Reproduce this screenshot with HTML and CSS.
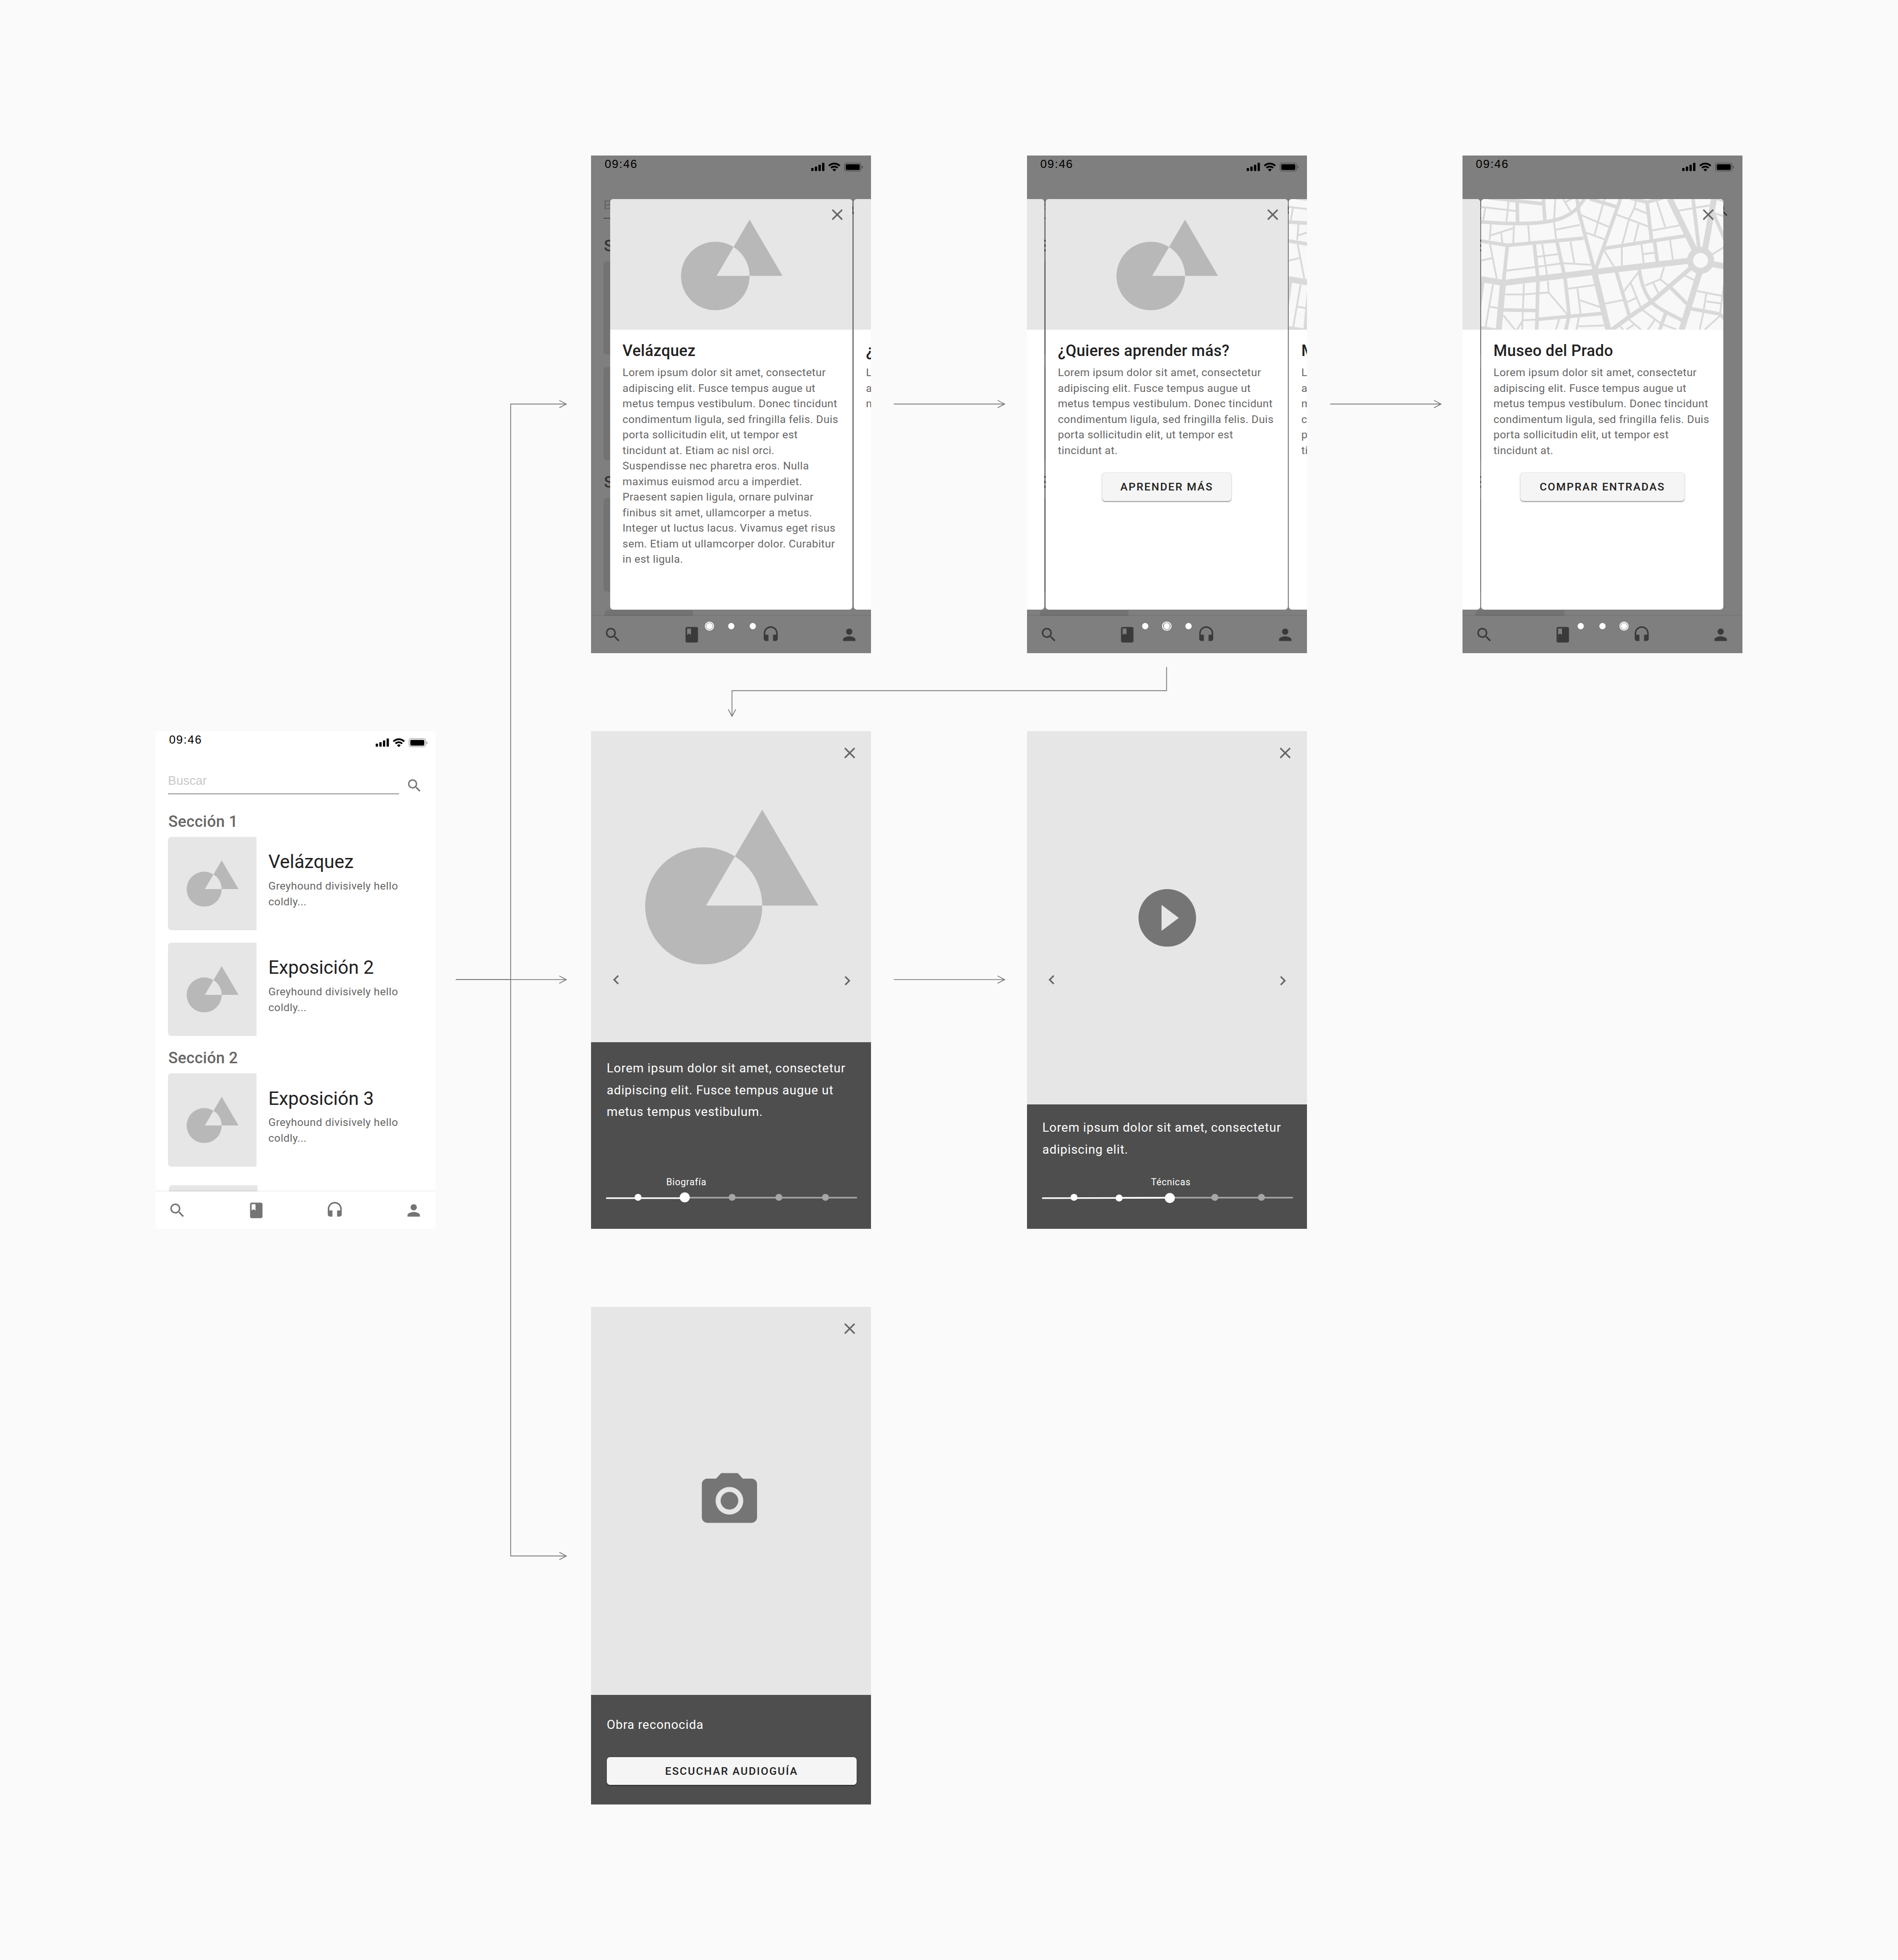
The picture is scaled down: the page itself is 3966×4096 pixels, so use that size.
FILE: index.html
```html
<!DOCTYPE html>
<html lang="es">
<head>
<meta charset="utf-8">
<title>Museo · flujo de pantallas</title>
<link rel="stylesheet" href="styles.css">
</head>
<body>

<svg class="defs" aria-hidden="true">
  <symbol id="i-search" viewBox="0 0 24 24"><path d="M15.5 14h-.79l-.28-.27A6.471 6.471 0 0 0 16 9.5 6.5 6.5 0 1 0 9.5 16c1.61 0 3.09-.59 4.23-1.57l.27.28v.79l5 4.99L20.49 19l-4.99-5zm-6 0C7.01 14 5 11.99 5 9.5S7.01 5 9.5 5 14 7.01 14 9.5 11.99 14 9.5 14z"/></symbol>
  <symbol id="i-book" viewBox="0 0 24 24"><path d="M18 2H6c-1.1 0-2 .9-2 2v16c0 1.1.9 2 2 2h12c1.1 0 2-.9 2-2V4c0-1.1-.9-2-2-2zM6 4h5v8l-2.5-1.5L6 12V4z"/></symbol>
  <symbol id="i-headset" viewBox="0 0 24 24"><path d="M12 1c-4.97 0-9 4.03-9 9v7c0 1.66 1.34 3 3 3h3v-8H5v-2c0-3.87 3.13-7 7-7s7 3.13 7 7v2h-4v8h3c1.66 0 3-1.34 3-3v-7c0-4.97-4.03-9-9-9z"/></symbol>
  <symbol id="i-person" viewBox="0 0 24 24"><path d="M12 12c2.21 0 4-1.79 4-4s-1.79-4-4-4-4 1.79-4 4 1.79 4 4 4zm0 2c-2.67 0-8 1.34-8 4v2h16v-2c0-2.66-5.33-4-8-4z"/></symbol>
  <symbol id="i-close" viewBox="0 0 24 24"><path d="M19 6.41L17.59 5 12 10.59 6.41 5 5 6.41 10.59 12 5 17.59 6.41 19 12 13.41 17.59 19 19 17.59 13.41 12z"/></symbol>
  <symbol id="i-left" viewBox="0 0 24 24"><path d="M15.41 7.41L14 6l-6 6 6 6 1.41-1.41L10.83 12z"/></symbol>
  <symbol id="i-right" viewBox="0 0 24 24"><path d="M10 6L8.59 7.41 13.17 12l-4.58 4.59L10 18l6-6z"/></symbol>
  <symbol id="i-play" viewBox="0 0 24 24"><path d="M12 2C6.48 2 2 6.48 2 12s4.48 10 10 10 10-4.48 10-10S17.52 2 12 2zm-2 14.5v-9l6 4.5-6 4.5z"/></symbol>
  <symbol id="i-camera" viewBox="0 0 24 24"><circle cx="12" cy="12" r="3.2"/><path d="M9 2L7.17 4H4c-1.1 0-2 .9-2 2v12c0 1.1.9 2 2 2h16c1.1 0 2-.9 2-2V6c0-1.1-.9-2-2-2h-3.17L15 2H9zm3 15c-2.76 0-5-2.24-5-5s2.24-5 5-5 5 2.24 5 5-2.24 5-5 5z"/></symbol>
  <symbol id="i-status" viewBox="0 0 67 11.4">
    <rect x="0" y="6.7" width="3" height="4" rx=".8"/>
    <rect x="4.67" y="4.9" width="3" height="5.8" rx=".8"/>
    <rect x="9.33" y="2.6" width="3" height="8.1" rx=".8"/>
    <rect x="14" y="0.2" width="3" height="10.5" rx=".8"/>
    <path transform="translate(22.1 0)" d="M7.67 2.28c2.23 0 4.37.85 5.98 2.38.12.12.31.12.43 0l1.16-1.17a.32.32 0 0 0 0-.45 10.9 10.9 0 0 0-15.14 0 .32.32 0 0 0 0 .45l1.16 1.17c.12.12.31.12.43 0a8.67 8.67 0 0 1 5.98-2.38zm0 3.8c1.22 0 2.4.46 3.29 1.28.12.12.32.12.43 0l1.16-1.18a.32.32 0 0 0 0-.46 7.15 7.15 0 0 0-9.76 0 .32.32 0 0 0 0 .46l1.16 1.18c.12.12.31.12.43 0a4.87 4.87 0 0 1 3.29-1.28zm2.23 2.58a.31.31 0 0 1-.01.45l-2 2.02a.32.32 0 0 1-.45 0l-2-2.02a.31.31 0 0 1-.01-.45 3.43 3.43 0 0 1 4.47 0z"/>
    <rect x="43" y=".5" width="21" height="10.33" rx="2.3" fill="none" stroke="#000" stroke-opacity=".35"/>
    <path d="M65.2 3.7v4c.8-.35 1.3-1.13 1.3-2s-.5-1.65-1.3-2z" fill-opacity=".4"/>
    <rect x="44.5" y="2" width="18" height="7.33" rx="1.33"/>
  </symbol>
  <symbol id="i-art" viewBox="0 0 296 264.4"><path fill-rule="evenodd" d="M0 164.4a100 100 0 1 1 200 0a100 100 0 1 1 -200 0zM104 163.8L200 0L296 163.8z"/></symbol>
  <symbol id="i-map" viewBox="42.8 36 1482.5 1008" preserveAspectRatio="none">
    <rect class="map-ground" x="42" y="35" width="1484" height="1010"/>
    <g class="road road-s">
      <path d="M42 96L255 128M210 55L197 212M68 105L55 200M102 232L94 352M98 317L240 260M165 295L172 375M243 240L239 378M330 236L338 366"/>
      <path d="M496 36L488 195V215L501 345M544 36L592 138M560 58L596 34M498 273L645 236M640 153L822 250M798 34L787 75L735 312M676 292L795 346"/>
      <path d="M990 50L978 105L945 195L905 382M868 155L1065 248M980 108L1055 147M1005 225L978 365M1116 55L1167 250M1088 278L1255 239M1250 125L1442 84M1478 36L1526 54M1465 145L1526 168M1455 462L1526 407"/>
      <path d="M902 400V550M793 430L853 557M1022 385L1035 530M1032 461L1100 450M1196 350L1214 502M588 362L612 530M545 531L712 543M416 382L445 620M385 481L512 461M198 588L380 560L530 533M42 511L110 491M97 385L138 652"/>
      <path d="M115 695L70 1022M98 867L145 876M304 690L298 880L293 1045M190 772H300L455 757L570 928M450 668L455 757M178 932L252 1048M295 975L260 1048M297 971L373 966"/>
      <path d="M519 962L499 1046M640 950L624 1046M630 1018L795 1011M573 728L735 699M631 725L650 918M645 816L770 869M798 843L910 815M1003 600L915 748M957 685L1017 870M935 832L988 799"/>
      <path d="M1160 560L1137 655L1045 702M1137 655L1190 708M1095 685L1127 767M1287 625L1347 663M1362 745L1515 783M1418 765L1403 885M1418 826L1507 841M1526 700L1503 910M1400 912L1377 1046M1500 938L1406 1046"/>
      <path d="M1030 893L1140 997L1235 1042M1103 968L1060 1046M947 965L1021 1046M978 1003L930 1042M893 1018L911 1046"/>
    </g>
    <g class="road road-m">
      <path d="M42 212C140 222 290 231 390 219C500 206 570 180 633 103L674 34M88 26L415 72M263 50L265 215M423 34L432 205"/>
      <path d="M42 359L203 393L668 338M203 393L180 670M629 34L638 130L735 590M894 34L740 585M706 34L868 95M955 30L1056 60L1150 28M1056 60L1083 345M795 416L1287 320"/>
      <path d="M1101 358L1119 520M367 385L390 655L382 1046M505 362L548 605L556 655L580 930L560 1046M393 963L785 918M175 891L375 896M869 598L948 938M1008 578C1020 690 1045 770 1083 828C1120 880 1190 920 1272 972"/>
      <path d="M1190 706L1300 845M1325 882L1500 922L1532 962M1171 913L1133 1046M1337 34L1373 415M1455 130L1536 362M53 670L26 910M36 1029L150 1050"/>
    </g>
    <path class="road road-d" d="M1320 571L1084 828L948 945L838 1046"/>
    <g class="road road-l">
      <path d="M42 654L180 683L735 598L1310 512M1458 538L1530 555M1376 605L1267 1046M175 700L150 1046M736 610L820 1046M1195 34L1348 430M1465 34L1410 425"/>
      <ellipse class="roundabout" cx="1383" cy="509" rx="64" ry="80.5"/>
    </g>
  </symbol>
</svg>

<template id="home-template">
  <div class="home">
    <div class="home-body">
      <div class="status"><span>09:46</span><svg class="status-icons"><use href="#i-status"/></svg></div>
      <div class="search"><div class="search-field">Buscar</div><svg class="icon search-icon"><use href="#i-search"/></svg></div>
      <h2 class="section">Sección 1</h2>
      <div class="expo"><div class="thumb"><svg><use href="#i-art"/></svg></div><div class="expo-text"><h3>Velázquez</h3><p>Greyhound divisively hello<br>coldly...</p></div></div>
      <div class="expo"><div class="thumb"><svg><use href="#i-art"/></svg></div><div class="expo-text"><h3>Exposición 2</h3><p>Greyhound divisively hello<br>coldly...</p></div></div>
      <h2 class="section section-next">Sección 2</h2>
      <div class="expo"><div class="thumb"><svg><use href="#i-art"/></svg></div><div class="expo-text"><h3>Exposición 3</h3><p>Greyhound divisively hello<br>coldly...</p></div></div>
      <div class="expo expo-cut"><div class="thumb"></div></div>
    </div>
    <div class="nav">
      <svg class="icon"><use href="#i-search"/></svg>
      <svg class="icon"><use href="#i-book"/></svg>
      <svg class="icon"><use href="#i-headset"/></svg>
      <svg class="icon"><use href="#i-person"/></svg>
    </div>
  </div>
</template>

<main class="board">
  <svg class="arrows" viewBox="0 0 2440 2520">
    <path d="M586 1259.5H728"/>
    <path d="M586 1259.5H656.5V519.5H728"/>
    <path d="M586 1259.5H656.5V2000.5H728"/>
    <path d="M719 514.7L728 519.5L719 524.3M719 1254.7L728 1259.5L719 1264.3M719 1995.7L728 2000.5L719 2005.3"/>
    <path d="M1149 519.5H1291.5M1282.5 514.7L1291.5 519.5L1282.5 524.3M1710 519.5H1852.5M1843.5 514.7L1852.5 519.5L1843.5 524.3"/>
    <path d="M1149 1259.5H1291.5M1282.5 1254.7L1291.5 1259.5L1282.5 1264.3"/>
    <path d="M1499.7 857.5V888H941V921M936.2 912L941 921L945.8 912"/>
  </svg>

  <section class="screen at-home"><div data-home></div></section>

  <section class="screen covered at-card1">
    <div data-home></div>
    <div class="scrim"></div>
    <div class="deck deck-first">
      <article class="card">
        <div class="card-art"><svg><use href="#i-art"/></svg></div>
        <svg class="icon close"><use href="#i-close"/></svg>
        <div class="card-text">
          <h2>Velázquez</h2>
          <p>Lorem ipsum dolor sit amet, consectetur<br>adipiscing elit. Fusce tempus augue ut<br>metus tempus vestibulum. Donec tincidunt<br>condimentum ligula, sed fringilla felis. Duis<br>porta sollicitudin elit, ut tempor est<br>tincidunt at. Etiam ac nisl orci.<br>Suspendisse nec pharetra eros. Nulla<br>maximus euismod arcu a imperdiet.<br>Praesent sapien ligula, ornare pulvinar<br>finibus sit amet, ullamcorper a metus.<br>Integer ut luctus lacus. Vivamus eget risus<br>sem. Etiam ut ullamcorper dolor. Curabitur<br>in est ligula.</p>
        </div>
      </article>
      <article class="card">
        <div class="card-art"></div>
        <div class="card-text">
          <h2>¿Quieres aprender más?</h2>
          <p>Lorem ipsum dolor sit amet, consectetur<br>adipiscing elit. Fusce tempus augue ut<br>metus tempus vestibulum.</p>
        </div>
      </article>
    </div>
    <div class="dots"><i class="dot dot-on"></i><i class="dot"></i><i class="dot"></i></div>
  </section>

  <section class="screen covered at-card2">
    <div data-home></div>
    <div class="scrim"></div>
    <div class="deck">
      <article class="card"><div class="card-art"></div></article>
      <article class="card">
        <div class="card-art"><svg><use href="#i-art"/></svg></div>
        <svg class="icon close"><use href="#i-close"/></svg>
        <div class="card-text">
          <h2>¿Quieres aprender más?</h2>
          <p>Lorem ipsum dolor sit amet, consectetur<br>adipiscing elit. Fusce tempus augue ut<br>metus tempus vestibulum. Donec tincidunt<br>condimentum ligula, sed fringilla felis. Duis<br>porta sollicitudin elit, ut tempor est<br>tincidunt at.</p>
          <button class="btn btn-learn" type="button">APRENDER MÁS</button>
        </div>
      </article>
      <article class="card">
        <svg class="card-map"><use href="#i-map"/></svg>
        <div class="card-text">
          <h2>Museo del Prado</h2>
          <p>Lorem ipsum dolor sit amet, consectetur<br>adipiscing elit. Fusce tempus augue ut<br>metus tempus vestibulum. Donec tincidunt<br>condimentum ligula, sed fringilla felis. Duis<br>porta sollicitudin elit, ut tempor est<br>tincidunt at.</p>
        </div>
      </article>
    </div>
    <div class="dots"><i class="dot"></i><i class="dot dot-on"></i><i class="dot"></i></div>
  </section>

  <section class="screen covered at-card3">
    <div data-home></div>
    <div class="scrim"></div>
    <div class="deck">
      <article class="card"><div class="card-art"></div></article>
      <article class="card">
        <svg class="card-map"><use href="#i-map"/></svg>
        <svg class="icon close"><use href="#i-close"/></svg>
        <div class="card-text">
          <h2>Museo del Prado</h2>
          <p>Lorem ipsum dolor sit amet, consectetur<br>adipiscing elit. Fusce tempus augue ut<br>metus tempus vestibulum. Donec tincidunt<br>condimentum ligula, sed fringilla felis. Duis<br>porta sollicitudin elit, ut tempor est<br>tincidunt at.</p>
          <button class="btn" type="button">COMPRAR ENTRADAS</button>
        </div>
      </article>
    </div>
    <div class="dots"><i class="dot"></i><i class="dot"></i><i class="dot dot-on"></i></div>
  </section>

  <section class="screen guide at-bio">
    <div class="media">
      <svg class="icon media-close"><use href="#i-close"/></svg>
      <svg class="media-art"><use href="#i-art"/></svg>
      <div class="steps"><svg class="icon"><use href="#i-left"/></svg><svg class="icon step-next"><use href="#i-right"/></svg></div>
    </div>
    <div class="panel panel-bio">
      <p>Lorem ipsum dolor sit amet, consectetur<br>adipiscing elit. Fusce tempus augue ut<br>metus tempus vestibulum.</p>
      <div class="timeline">
        <span class="caption caption-bio">Biografía</span>
        <svg class="track" viewBox="0 592 360 16">
          <path class="rest" d="M120 599.9H341.3"/>
          <g class="rest"><circle cx="181.4" cy="599.5" r="4.5"/><circle cx="241.5" cy="599.5" r="4.5"/><circle cx="301.4" cy="599.5" r="4.5"/></g>
          <path class="done" d="M20.1 600.5H120"/>
          <g class="done"><circle cx="60.4" cy="599.5" r="4.5"/><circle cx="120.5" cy="599.5" r="6.5"/></g>
        </svg>
      </div>
    </div>
  </section>

  <section class="screen guide at-video">
    <div class="media">
      <svg class="icon media-close"><use href="#i-close"/></svg>
      <svg class="media-play"><use href="#i-play"/></svg>
      <div class="steps"><svg class="icon"><use href="#i-left"/></svg><svg class="icon step-next"><use href="#i-right"/></svg></div>
    </div>
    <div class="panel panel-video">
      <p>Lorem ipsum dolor sit amet, consectetur<br>adipiscing elit.</p>
      <div class="timeline">
        <span class="caption caption-video">Técnicas</span>
        <svg class="track" viewBox="0 592 360 16">
          <path class="rest" d="M120 599.9H341.3"/>
          <g class="rest"><circle cx="241.5" cy="599.5" r="4.5"/><circle cx="301.4" cy="599.5" r="4.5"/></g>
          <path class="done" d="M20.1 600.5L183.5 600.1"/>
          <g class="done"><circle cx="60.4" cy="599.5" r="4.5"/><circle cx="118.4" cy="600.4" r="4.5"/><circle cx="183.6" cy="600.4" r="6.5"/></g>
        </svg>
      </div>
    </div>
  </section>

  <section class="screen guide at-camera">
    <div class="media">
      <svg class="icon media-close"><use href="#i-close"/></svg>
      <svg class="media-camera"><use href="#i-camera"/></svg>
    </div>
    <div class="panel panel-camera">
      <p>Obra reconocida</p>
      <button class="btn btn-wide" type="button">ESCUCHAR AUDIOGUÍA</button>
    </div>
  </section>
</main>

<script src="script.js"></script>
</body>
</html>
```

FILE: styles.css
```css
/* 1rem = 10 design units of the 2440 x 2520 board */
html {
  font-size: 16.2541px;
}

* {
  box-sizing: border-box;
  margin: 0;
  padding: 0;
}

body {
  background: #fafafa;
  font-family: Roboto, "Liberation Sans", sans-serif;
  color: #212121;
  overflow: hidden;
}

svg {
  display: block;
  flex: none;
  overflow: visible;
}

.defs {
  position: absolute;
  width: 0;
  height: 0;
}

.board {
  position: relative;
  width: 244rem;
  height: 252rem;
  padding: 20rem;
  display: grid;
  grid-template-columns: repeat(4, 36rem);
  grid-template-rows: repeat(3, 64rem);
  column-gap: 20rem;
  row-gap: 10rem;
}

.arrows {
  position: absolute;
  left: 0;
  top: 0;
  width: 244rem;
  height: 252rem;
  fill: none;
  stroke: #757575;
  stroke-width: 1;
}

.screen {
  position: relative;
  width: 36rem;
  height: 64rem;
  overflow: hidden;
  background: #fff;
}

.at-home { grid-area: 2 / 1; }
.at-card1 { grid-area: 1 / 2; }
.at-card2 { grid-area: 1 / 3; }
.at-card3 { grid-area: 1 / 4; }
.at-bio { grid-area: 2 / 2; }
.at-video { grid-area: 2 / 3; }
.at-camera { grid-area: 3 / 2; }

.icon {
  width: 2.4rem;
  height: 2.4rem;
  fill: #757575;
}

/* Home */

.home {
  height: 64rem;
  display: flex;
  flex-direction: column;
}

.home-body {
  height: 59.2rem;
  overflow: hidden;
  padding-left: 1.6rem;
}

.status {
  height: 4rem;
  padding: .13rem 1.03rem 0 .13rem;
  display: flex;
  justify-content: space-between;
  font-family: "Liberation Sans", Arial, sans-serif;
  font-size: 1.5rem;
  line-height: 2rem;
  letter-spacing: .1rem;
  color: #000;
}

.status-icons {
  width: 6.7rem;
  height: 1.14rem;
  margin-top: .79rem;
  fill: #000;
}

.search {
  display: flex;
  align-items: flex-start;
  height: 4.1rem;
}

.search-field {
  width: 29.7rem;
  height: 4.1rem;
  padding-top: 1.15rem;
  border-bottom: .125rem solid #979797;
  font-family: "Liberation Sans", Arial, sans-serif;
  font-size: 1.6rem;
  line-height: 2.4rem;
  color: #c8c8c8;
}

.search-icon {
  width: 2.2rem;
  height: 2.2rem;
  margin: 1.9rem 0 0 .9rem;
}

.section {
  margin: 2.34rem 0 .76rem .04rem;
  font-size: 2rem;
  font-weight: 500;
  line-height: 2.4rem;
  letter-spacing: .02rem;
  color: #666;
}

.section-next {
  margin-top: 1.66rem;
}

.expo {
  display: flex;
  height: 12rem;
}

.expo + .expo {
  margin-top: 1.6rem;
}

.expo + .expo-cut {
  margin: 2.4rem 0 0 .1rem;
}

.thumb {
  width: 11.4rem;
  height: 12rem;
  display: flex;
  align-items: center;
  justify-content: center;
  border-radius: .4rem 0 0 .4rem;
  background: #e6e6e6;
}

.thumb svg {
  width: 6.67rem;
  height: 5.96rem;
  fill: #b8b8b8;
}

.expo-text {
  padding: 1.62rem 0 0 1.5rem;
}

.expo-text h3 {
  font-size: 2.4rem;
  font-weight: 400;
  line-height: 3.2rem;
}

.expo-text p {
  margin-top: .54rem;
  font-size: 1.4rem;
  line-height: 2rem;
  letter-spacing: .025rem;
  color: #666;
}

.nav {
  position: relative;
  height: 4.8rem;
  padding: 0 1.6rem;
  display: flex;
  align-items: center;
  justify-content: space-between;
  background: #fff;
  box-shadow: 0 -.05rem .2rem rgba(0, 0, 0, .11);
}

/* Cards over the dimmed home */

.covered .expo-text {
  visibility: hidden;
}

.scrim {
  position: absolute;
  inset: 0;
  background: rgba(0, 0, 0, .5);
}

.deck {
  position: absolute;
  top: 5.6rem;
  left: -28.9rem;
  display: flex;
  gap: .13rem;
}

.deck-first {
  left: 2.43rem;
}

.card {
  position: relative;
  flex: none;
  width: 31.17rem;
  height: 52.8rem;
  border-radius: .4rem;
  overflow: hidden;
  background: #fff;
}

.card-art {
  height: 16.8rem;
  padding: 2.61rem 0 0 9.12rem;
  background: #e6e6e6;
}

.card-art svg {
  width: 13.05rem;
  height: 11.66rem;
  fill: #b8b8b8;
}

.card-map {
  width: 31.2rem;
  height: 16.8rem;
}

.map-ground {
  fill: #f8f8f8;
}

.road path,
.road.road-d,
.road ellipse {
  fill: none;
  stroke: #d9d9d9;
  vector-effect: non-scaling-stroke;
}

.road-s path { stroke-width: .23rem; }
.road-m path { stroke-width: .46rem; }
.road.road-d { stroke-width: .56rem; }
.road-l path { stroke-width: .77rem; }
.road-l .roundabout { stroke-width: .78rem; }

.close {
  position: absolute;
  top: .8rem;
  right: .77rem;
  fill: #666;
}

.card-text {
  padding: 1.55rem 1.57rem 0 1.6rem;
  display: flex;
  flex-direction: column;
  align-items: flex-start;
}

.card-text h2 {
  font-size: 2rem;
  font-weight: 500;
  line-height: 2.4rem;
  letter-spacing: .02rem;
  white-space: nowrap;
}

.card-text p {
  margin-top: .61rem;
  font-size: 1.4rem;
  line-height: 2rem;
  letter-spacing: .025rem;
  white-space: nowrap;
  color: #666;
}

.btn {
  align-self: center;
  height: 3.6rem;
  margin-top: 1.84rem;
  padding: 0 2.5rem;
  border: 0;
  border-radius: .4rem;
  background: #f5f5f5;
  box-shadow: 0 .1rem .1rem rgba(0, 0, 0, .35), 0 0 .2rem rgba(0, 0, 0, .18);
  font-family: inherit;
  font-size: 1.4rem;
  font-weight: 500;
  letter-spacing: .125rem;
  color: #212121;
}

.btn-learn {
  width: 16.6rem;
  padding: 0;
}

.dots {
  position: absolute;
  top: 59.9rem;
  left: 0;
  width: 36rem;
  display: flex;
  justify-content: center;
  gap: 1.585rem;
}

.dot {
  width: 1.2rem;
  height: 1.2rem;
  border-radius: 50%;
  background: radial-gradient(circle, #fff .38rem, transparent .42rem);
}

.dot-on {
  border: .125rem solid #fff;
}

/* Guide screens */

.guide {
  display: flex;
  flex-direction: column;
}

.media {
  flex: 1;
  padding-top: 1.6rem;
  background: #e6e6e6;
}

.media-close {
  margin-left: 32.02rem;
  fill: #666;
}

.media-art {
  width: 22.29rem;
  height: 19.91rem;
  margin: 6.08rem 0 0 6.95rem;
  fill: #b8b8b8;
}

.media-play {
  width: 8.88rem;
  height: 8.88rem;
  margin: 15.6rem 0 0 13.62rem;
  fill: #757575;
}

.media-camera {
  width: 8.52rem;
  height: 8.52rem;
  margin: 16.7rem 0 0 13.5rem;
  fill: #757575;
}

.steps {
  display: flex;
  justify-content: space-between;
  padding: 0 1.87rem 0 2.02rem;
}

.media-art + .steps { margin-top: .8rem; }
.media-play + .steps { margin-top: 2.32rem; }

.steps .icon {
  fill: #666;
}

.steps .step-next {
  margin-top: .08rem;
}

.panel {
  display: flex;
  flex-direction: column;
  justify-content: space-between;
  background: #4e4e4e;
  color: #fff;
}

.panel p {
  padding-left: 2rem;
  font-size: 1.6rem;
  line-height: 2.8rem;
  letter-spacing: .05rem;
  white-space: nowrap;
}

.panel-bio {
  height: 24rem;
  padding: 1.98rem 0 3.2rem;
}

.panel-video {
  height: 16rem;
  padding: 1.6rem 0 3.2rem;
}

.panel-camera {
  height: 14.1rem;
  padding: 2.48rem 1.9rem 2.5rem 0;
}

.timeline {
  display: flex;
  flex-direction: column;
  gap: .36rem;
}

.caption {
  font-size: 1.2rem;
  line-height: 1.6rem;
  letter-spacing: .04rem;
}

.caption-bio { padding-left: 9.66rem; }
.caption-video { padding-left: 15.97rem; }

.track {
  width: 36rem;
  height: 1.6rem;
}

.track path {
  stroke-width: 2;
  stroke-linecap: round;
}

.track .rest {
  fill: #a6a6a6;
  stroke: #a6a6a6;
}

.track .done {
  fill: #fff;
  stroke: #fff;
}

.track g.rest,
.track g.done {
  stroke: none;
}

.btn-wide {
  align-self: flex-start;
  width: 32.1rem;
  margin: 0 0 0 2rem;
  padding: 0;
}
```

FILE: script.js
```js
// The home screen is drawn on its own and again behind each card deck.
const home = document.getElementById('home-template');
document.querySelectorAll('[data-home]').forEach((slot) => {
  slot.replaceWith(home.content.cloneNode(true));
});
```
